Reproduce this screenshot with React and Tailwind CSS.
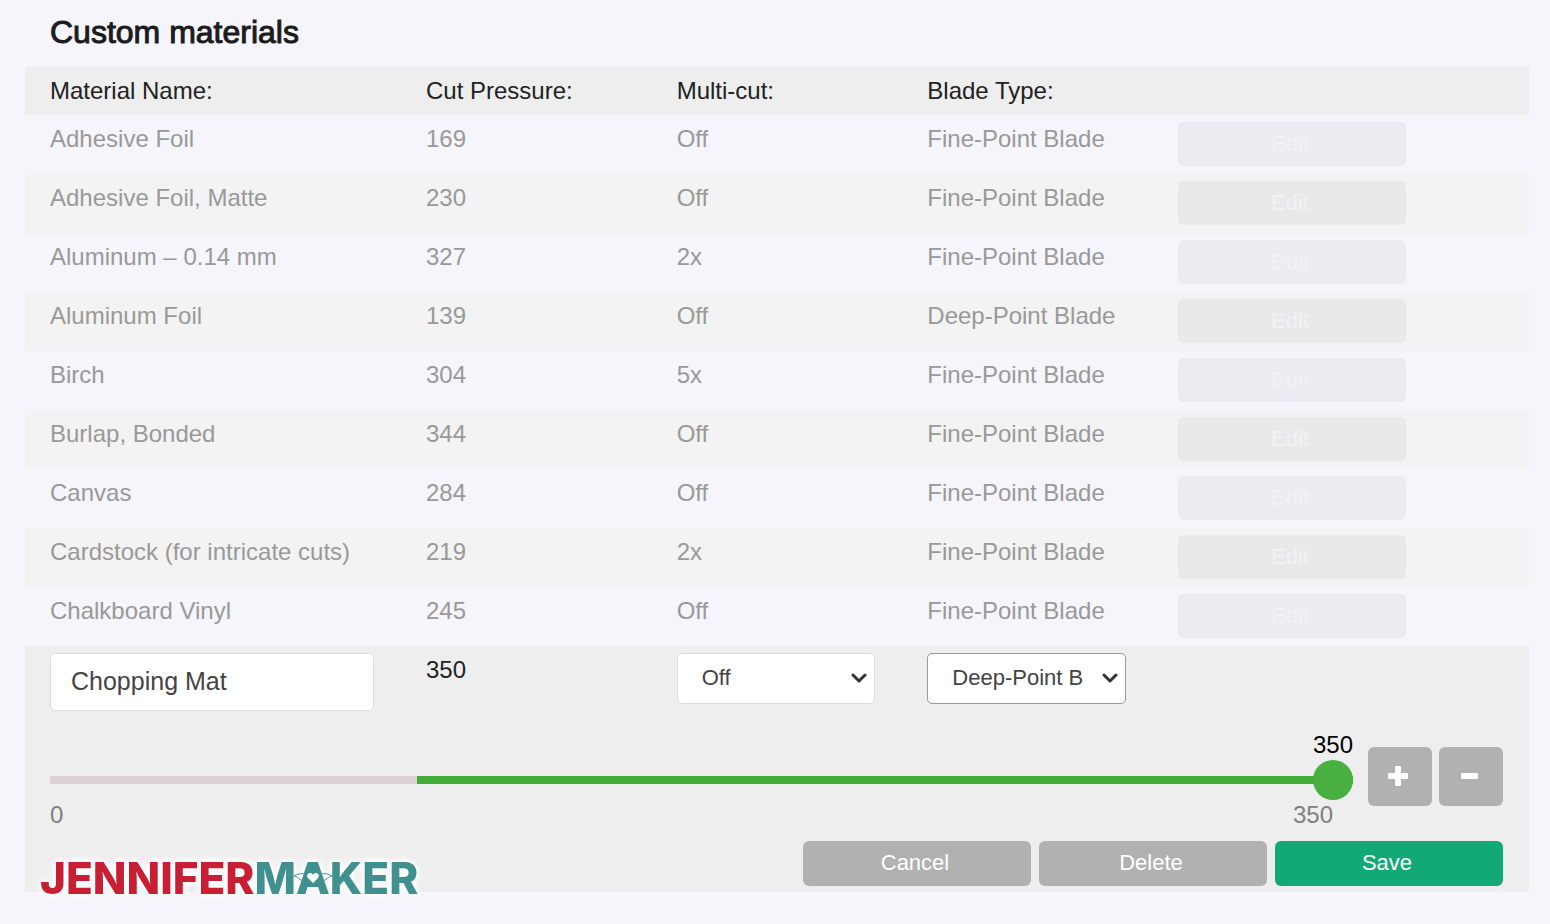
import React, { useState } from 'react';
import clsx from 'clsx';

const MATERIALS = [
  { name: 'Adhesive Foil', pressure: 169, multiCut: 'Off', blade: 'Fine-Point Blade' },
  { name: 'Adhesive Foil, Matte', pressure: 230, multiCut: 'Off', blade: 'Fine-Point Blade' },
  { name: 'Aluminum – 0.14 mm', pressure: 327, multiCut: '2x', blade: 'Fine-Point Blade' },
  { name: 'Aluminum Foil', pressure: 139, multiCut: 'Off', blade: 'Deep-Point Blade' },
  { name: 'Birch', pressure: 304, multiCut: '5x', blade: 'Fine-Point Blade' },
  { name: 'Burlap, Bonded', pressure: 344, multiCut: 'Off', blade: 'Fine-Point Blade' },
  { name: 'Canvas', pressure: 284, multiCut: 'Off', blade: 'Fine-Point Blade' },
  { name: 'Cardstock (for intricate cuts)', pressure: 219, multiCut: '2x', blade: 'Fine-Point Blade' },
  { name: 'Chalkboard Vinyl', pressure: 245, multiCut: 'Off', blade: 'Fine-Point Blade' },
];

const MAX_PRESSURE = 350;

function MaterialRow({ material, striped }) {
  return (
    <tr className={clsx('h-[59px] align-top text-2xl leading-8 text-[#999]', striped && 'bg-[#f3f3f3]')}>
      <td className="pl-[25px] pt-2 whitespace-nowrap">{material.name}</td>
      <td className="pl-[25px] pt-2">{material.pressure}</td>
      <td className="pl-[25px] pt-2">{material.multiCut}</td>
      <td className="pl-[25px] pt-2 whitespace-nowrap">{material.blade}</td>
      <td className="pl-[25px] pt-[7px]">
        <button
          type="button"
          disabled
          className="block h-11 w-[228px] rounded-[5px] bg-black/[0.04] pr-1 text-[22px] leading-8 text-[#f2f2f4]"
        >
          Edit
        </button>
      </td>
    </tr>
  );
}

function Dropdown({ label, value, onChange, options, active }) {
  return (
    <div className="relative">
      <select
        aria-label={label}
        value={value}
        onChange={onChange}
        className={clsx(
          'block h-[51px] w-full appearance-none overflow-hidden rounded-[5px] border bg-white pr-[42px] pb-[2px] pl-6 text-[22px] text-[#444]',
          active ? 'border-[#999]' : 'border-[#ddd]'
        )}
      >
        {options.map(option => (
          <option key={option}>{option}</option>
        ))}
      </select>
      <svg
        className="pointer-events-none absolute top-5 right-2 h-3 w-4"
        viewBox="0 0 16 12"
        fill="none"
        stroke="#333"
        strokeWidth="3"
        strokeLinecap="round"
        strokeLinejoin="round"
        aria-hidden="true"
      >
        <path d="M2 2 L8 8 L14 2" />
      </svg>
    </div>
  );
}

function StepButton({ label, onClick, children }) {
  return (
    <button
      type="button"
      aria-label={label}
      onClick={onClick}
      className="flex h-[59px] w-16 items-center justify-center rounded-md bg-[#b1b1b1] pr-1 pb-[2px]"
    >
      <svg className="h-5 w-5" viewBox="0 0 20 20" fill="#fff" aria-hidden="true">
        {children}
      </svg>
    </button>
  );
}

function ActionButton({ primary, children }) {
  return (
    <button
      type="button"
      className={clsx(
        'h-[45px] w-[228px] rounded-md pr-1 pb-[2px] text-[22px] leading-8 text-white',
        primary ? 'bg-[#13a976]' : 'bg-[#b1b1b1]'
      )}
    >
      {children}
    </button>
  );
}

function Logo() {
  return (
    <div className="absolute bottom-[-16px] left-[15px] font-[Inter] text-[44px] leading-[60px] font-extrabold whitespace-nowrap text-[#c81f35] [filter:drop-shadow(0_0_3px_#fff)_drop-shadow(0_0_3px_#fff)]">
      JENNIFER
      <span className="text-[#409090]">
        M
        <span className="relative">
          A
          {/* winged heart over the letter */}
          <svg className="absolute top-3 left-1/2 h-8 w-10 -translate-x-1/2" viewBox="0 0 40 32" aria-hidden="true">
            <path
              d="M13 11 C8 10 4 11 1 13 C5 13 6 18 12 18 M27 11 C32 10 36 11 39 13 C35 13 34 18 28 18"
              fill="none"
              stroke="#409090"
              strokeWidth="1"
            />
            <path d="M17 3 H23 L29 23 H11 Z" fill="#409090" />
            <path d="M20 20 L15 15 C12 11 18 8 20 12 C22 8 28 11 25 15 Z" fill="#fff" />
          </svg>
        </span>
        KER
      </span>
    </div>
  );
}

export default function App() {
  const [name, setName] = useState('Chopping Mat');
  const [pressure, setPressure] = useState(MAX_PRESSURE);
  const [multiCut, setMultiCut] = useState('Off');
  const [blade, setBlade] = useState('Deep-Point Blade');

  const step = amount => setPressure(prev => Math.min(MAX_PRESSURE, Math.max(0, prev + amount)));

  return (
    <div className="min-h-screen bg-[#f5f5fb] pt-3 pr-[21px] pb-8 pl-[25px] font-['Liberation_Sans',Arial,sans-serif]">
      <h1 className="mb-[15px] pl-[25px] text-[32px] leading-10 text-[#1c1c1c] [-webkit-text-stroke:1px_#1c1c1c]">
        Custom materials
      </h1>

      <div className="relative">
        <table className="w-full table-fixed border-collapse text-left">
          <thead>
            <tr className="h-12 bg-[#eee] text-2xl text-[#222]">
              <th scope="col" className="w-1/4 pl-[25px] font-normal">Material Name:</th>
              <th scope="col" className="w-1/6 pl-[25px] font-normal">Cut Pressure:</th>
              <th scope="col" className="w-1/6 pl-[25px] font-normal">Multi-cut:</th>
              <th scope="col" className="w-1/6 pl-[25px] font-normal">Blade Type:</th>
              <td className="w-1/4" />
            </tr>
          </thead>
          <tbody>
            {MATERIALS.map((material, index) => (
              <MaterialRow key={material.name} material={material} striped={index % 2 === 1} />
            ))}

            {/* Row being edited */}
            <tr className="bg-[#eee] align-top text-2xl leading-8 text-[#222]">
              <td className="pt-[7px] pr-[27px] pl-[25px]">
                <input
                  type="text"
                  aria-label="Material Name"
                  value={name}
                  onChange={e => setName(e.target.value)}
                  className="block h-[58px] w-full rounded-[5px] border border-[#ddd] bg-white px-5 pb-[2px] text-[25px] text-[#444]"
                />
              </td>
              <td className="pt-2 pl-[25px]">{pressure}</td>
              <td className="pt-[7px] pr-[27px] pl-[25px]">
                <Dropdown
                  label="Multi-cut"
                  value={multiCut}
                  onChange={e => setMultiCut(e.target.value)}
                  options={['Off', '2x', '3x', '4x', '5x']}
                />
              </td>
              <td className="pt-[7px] pr-[27px] pl-[25px]">
                <Dropdown
                  label="Blade Type"
                  value={blade}
                  onChange={e => setBlade(e.target.value)}
                  options={['Fine-Point Blade', 'Deep-Point Blade']}
                  active
                />
              </td>
              <td />
            </tr>

            <tr className="bg-[#eee]">
              <td colSpan={5} className="pt-[19px] pr-[26px] pb-[6px] pl-[25px]">
                <div className="flex gap-[15px]">
                  <div className="flex-1 text-2xl leading-[30px]">
                    <output htmlFor="pressure" className="block text-right text-black">{pressure}</output>
                    <input
                      id="pressure"
                      type="range"
                      aria-label="Cut Pressure"
                      min="0"
                      max={MAX_PRESSURE}
                      value={pressure}
                      onChange={e => setPressure(Number(e.target.value))}
                      className="block h-10 w-full appearance-none bg-transparent [&::-webkit-slider-runnable-track]:h-2 [&::-webkit-slider-runnable-track]:bg-[linear-gradient(to_right,#ddd2d6_367px,#41ad38_367px)] [&::-webkit-slider-thumb]:-mt-4 [&::-webkit-slider-thumb]:h-10 [&::-webkit-slider-thumb]:w-10 [&::-webkit-slider-thumb]:appearance-none [&::-webkit-slider-thumb]:rounded-full [&::-webkit-slider-thumb]:bg-[#49af41]"
                    />
                    <div className="flex justify-between pr-5 text-[#808080]">
                      <span>0</span>
                      <span>{MAX_PRESSURE}</span>
                    </div>
                  </div>
                  <div className="flex gap-[7px] pt-[17px]">
                    <StepButton label="Increase pressure" onClick={() => step(1)}>
                      <path d="M8 0h4a1 1 0 0 1 1 1v6h6a1 1 0 0 1 1 1v4a1 1 0 0 1-1 1h-6v6a1 1 0 0 1-1 1h-4a1 1 0 0 1-1-1v-6h-6a1 1 0 0 1-1-1v-4a1 1 0 0 1 1-1h6v-6a1 1 0 0 1 1-1z" />
                    </StepButton>
                    <StepButton label="Decrease pressure" onClick={() => step(-1)}>
                      <rect x="2" y="7" width="17" height="6" rx="1" />
                    </StepButton>
                  </div>
                </div>
                <div className="mt-[11px] flex justify-end gap-2">
                  <ActionButton>Cancel</ActionButton>
                  <ActionButton>Delete</ActionButton>
                  <ActionButton primary>Save</ActionButton>
                </div>
              </td>
            </tr>
          </tbody>
        </table>
        <Logo />
      </div>
    </div>
  );
}
